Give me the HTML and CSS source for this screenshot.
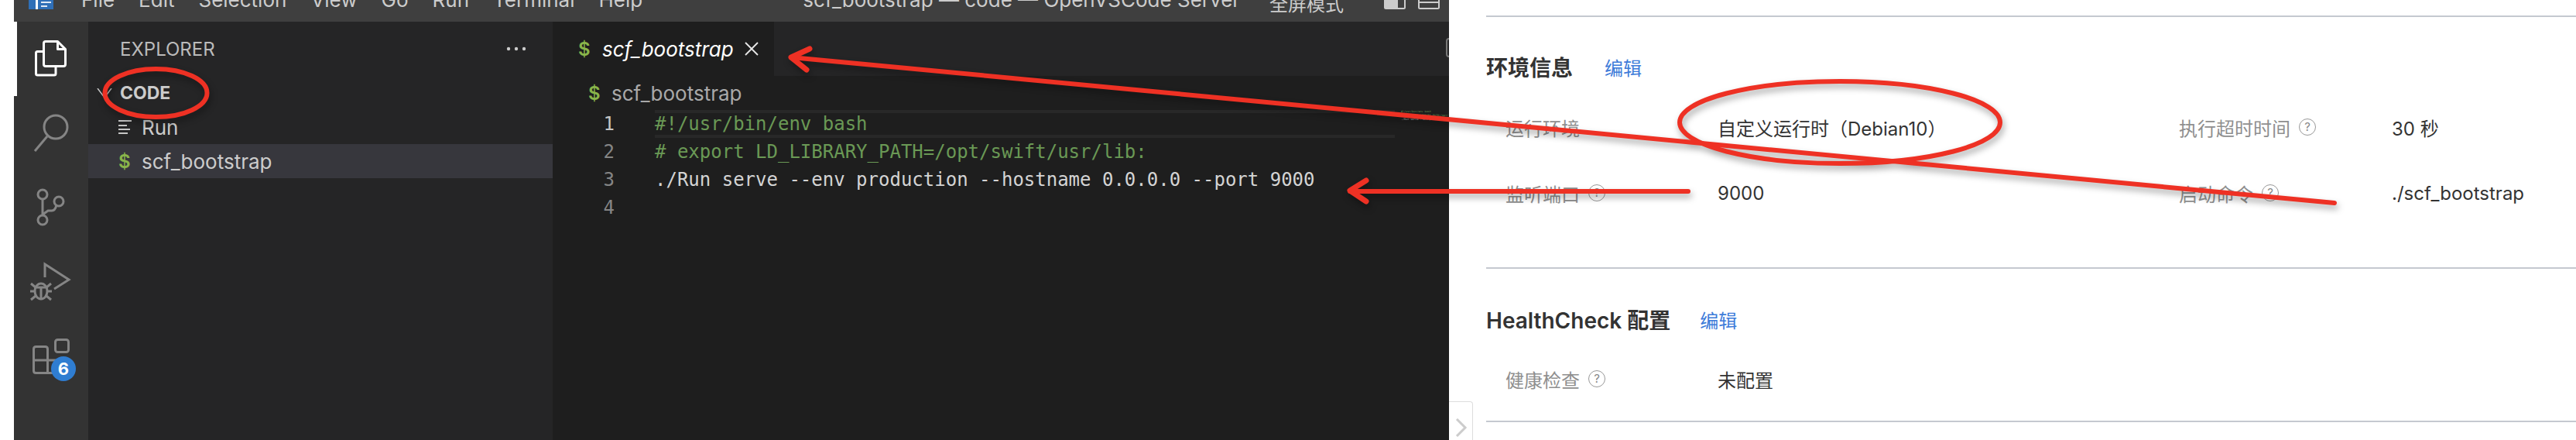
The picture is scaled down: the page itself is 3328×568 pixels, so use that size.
FILE: index.html
```html
<!DOCTYPE html>
<html lang="zh-CN">
<head>
<meta charset="utf-8">
<title>scf_bootstrap — code — OpenVSCode Server</title>
<link rel="stylesheet" href="styles.css">
</head>
<body>
<div class="page">
  <div class="gutter"></div>
  <div class="vscode">
    <header class="titlebar">
      <svg class="logo" viewBox="0 0 32 12"><rect width="32" height="12" fill="#2f6fb7"/><rect x="9" width="3" height="12" fill="#fff"/><rect x="16" y="2" width="13" height="2" fill="#dfe9f5"/><rect x="16" y="7" width="8" height="2" fill="#dfe9f5"/></svg>
      <nav class="menu"><span>File</span><span>Edit</span><span>Selection</span><span>View</span><span>Go</span><span>Run</span><span>Terminal</span><span>Help</span></nav>
      <div class="window-title">scf_bootstrap — code — OpenVSCode Server</div>
      <div class="fullscreen">全屏模式</div>
      <svg class="layout-icon" viewBox="0 0 28 12"><path d="M1 0V9.5Q1 11 2.500 11H25.500Q27 11 27 9.500V0" fill="none" stroke="#ccc" stroke-width="2"/><rect x="1" width="17" height="11" fill="#ccc"/></svg>
      <svg class="layout-icon" viewBox="0 0 28 12"><path d="M1 0V9.5Q1 11 2.500 11H25.500Q27 11 27 9.500V0M1 3H27" fill="none" stroke="#ccc" stroke-width="2"/></svg>
    </header>
    <div class="workbench">
      <aside class="activity">
        <div class="activity-item active">
          <svg class="activity-icon" viewBox="0 0 64 64"><g fill="none" stroke="#fff" stroke-width="3" stroke-linejoin="round"><path d="M25 9.500H40.500L50.500 19.500V39Q50.500 41.500 48 41.500H25Q22.500 41.500 22.500 39V12Q22.500 9.500 25 9.500Z"/><path d="M40.500 9.500V19.500H50.500"/><path d="M22.500 22.500H14.500Q12.500 22.500 12.500 24.500V51Q12.500 53 14.500 53H36Q38 53 38 51V41.500"/></g></svg>
        </div>
        <div class="activity-item">
          <svg class="activity-icon" viewBox="0 0 64 64"><g fill="none" stroke="#858585" stroke-width="3"><circle cx="38" cy="24" r="15"/><path d="M27 36L11 55"/></g></svg>
        </div>
        <div class="activity-item">
          <svg class="activity-icon" viewBox="0 0 64 64"><g fill="none" stroke="#858585" stroke-width="3"><circle cx="21" cy="15" r="6"/><circle cx="42" cy="24" r="6"/><circle cx="21" cy="48" r="6"/><path d="M21 21V42M21 41L28 36H33Q37 36 39 29"/></g></svg>
        </div>
        <div class="activity-item">
          <svg class="activity-icon" viewBox="0 0 64 64"><g fill="none" stroke="#858585" stroke-width="3"><path d="M24 26V9L55 29L36 41"/><ellipse cx="19" cy="44" rx="8" ry="10"/><path d="M12 39H25M19 39V54M6 34L12 39M32 34L26 39M5 44H11M27 44H33M6 55L12 50M32 55L26 50"/></g></svg>
        </div>
        <div class="activity-item">
          <svg class="activity-icon" viewBox="0 0 64 64"><g fill="none" stroke="#858585" stroke-width="3"><rect x="37.500" y="10.500" width="17" height="16" rx="3"/><path d="M27.500 53.500H12.500Q9.500 53.500 9.500 50.500V22.500Q9.500 19.500 12.500 19.500H24.500Q27.500 19.500 27.500 22.500V53.500ZM9.500 37H42M27.500 53.500H42"/></g></svg>
          <span class="badge">6</span>
        </div>
      </aside>
      <aside class="sidebar">
        <div class="sidebar-header"><span>EXPLORER</span><svg class="dots" viewBox="0 0 26 6"><circle cx="3" cy="3" r="2.200" fill="#ccc"/><circle cx="13" cy="3" r="2.200" fill="#ccc"/><circle cx="23" cy="3" r="2.200" fill="#ccc"/></svg></div>
        <div class="tree-root"><svg class="tree-chevron" viewBox="0 0 20 12"><path d="M1 0L10 12L19 0" fill="none" stroke="#c5c5c5" stroke-width="1.500"/></svg><strong>CODE</strong></div>
        <div class="tree-row"><svg class="file-lines" viewBox="0 0 18 18"><path d="M0 1H17M0 7H11M0 12H15M0 17H12" stroke="#c5c5c5" stroke-width="2"/></svg><span>Run</span></div>
        <div class="tree-row selected"><span class="dollar">$</span><span>scf_bootstrap</span></div>
      </aside>
      <main class="editor">
        <div class="tabbar">
          <div class="tab"><span class="dollar">$</span><em>scf_bootstrap</em><svg class="tab-close" viewBox="0 0 18 18"><path d="M1 1L17 17M17 1L1 17" stroke="#e8e8e8" stroke-width="1.800"/></svg></div>
          <div class="tab-action"></div>
        </div>
        <div class="breadcrumb"><span class="dollar">$</span><span>scf_bootstrap</span></div>
        <div class="editor-body">
          <div class="code">
            <div class="code-line current"><span class="line-number">1</span><code class="comment">#!/usr/bin/env bash</code></div>
            <div class="code-line"><span class="line-number">2</span><code class="comment"># export LD_LIBRARY_PATH=/opt/swift/usr/lib:</code></div>
            <div class="code-line"><span class="line-number">3</span><code>./Run serve --env production --hostname 0.0.0.0 --port 9000</code></div>
            <div class="code-line"><span class="line-number">4</span><code></code></div>
          </div>
          <div class="minimap"><div class="mini-comment">#!/usr/bin/env bash</div><div class="mini-comment"># export LD_LIBRARY_PATH=/opt/</div><div>./Run serve --env production</div></div>
        </div>
      </main>
    </div>
  </div>
  <section class="panel">
    <div class="section first">
      <div class="section-title"><h2>环境信息</h2><a>编辑</a></div>
      <div class="info-grid">
        <div class="label">运行环境</div><div class="value">自定义运行时（Debian10）</div>
        <div class="label">执行超时时间<i class="help">?</i></div><div class="value">30 秒</div>
        <div class="label">监听端口<i class="help">?</i></div><div class="value">9000</div>
        <div class="label">启动命令<i class="help">?</i></div><div class="value">./scf_bootstrap</div>
      </div>
    </div>
    <div class="section second">
      <div class="section-title"><h2>HealthCheck 配置</h2><a>编辑</a></div>
      <div class="info-grid">
        <div class="label">健康检查<i class="help">?</i></div><div class="value">未配置</div>
      </div>
    </div>
    <div class="collapse"><svg viewBox="0 0 16 24"><path d="M2 1L13 12L2 23" fill="none" stroke="#ccc" stroke-width="3"/></svg></div>
  </section>
</div>
<svg class="annotations" viewBox="0 0 3328 568">
  <g fill="none" stroke="#ee3124" stroke-width="6" stroke-linecap="round" stroke-linejoin="round">
    <ellipse cx="201.500" cy="120" rx="66" ry="31"/>
    <ellipse cx="2377" cy="158" rx="207" ry="53"/>
    <path d="M1022 74L3016 262" stroke-width="6"/>
    <path d="M1046 63L1022 74L1042 90" stroke-width="7"/>
    <path d="M1744 247H2181" stroke-width="6"/>
    <path d="M1765 233L1744 246L1765 260" stroke-width="7"/>
  </g>
</svg>
</body>
</html>
```

FILE: styles.css
```css
* { box-sizing: border-box; }
html, body { margin: 0; height: 100%; background: #fff; overflow: hidden; }
body { position: relative; font-family: Inter, "Noto Sans CJK SC", sans-serif; }

.page { display: flex; height: 568px; }
.gutter { width: 18px; flex: none; }
.vscode { width: 1854px; flex: none; display: flex; flex-direction: column; overflow: hidden; background: #1e1e1e; }

.titlebar { height: 28px; flex: none; display: flex; align-items: flex-start; padding-left: 19px; background: #3f3f3f; color: #ccc; font-size: 26px; line-height: 30px; overflow: hidden; }
.logo { width: 32px; height: 12px; flex: none; }
.menu { display: flex; gap: 31px; margin: -15px 0 0 36px; }
.window-title { margin: -15px 0 0 207px; white-space: nowrap; }
.fullscreen { margin: -11px 0 0 auto; font-size: 24px; font-family: "Noto Sans CJK SC", sans-serif; }
.layout-icon { width: 28px; height: 12px; flex: none; margin-left: 16px; }
.fullscreen + .layout-icon { margin-left: 52px; }
.layout-icon:last-child { margin-right: 12px; }

.workbench { flex: 1; display: flex; min-height: 0; }
.activity { width: 96px; flex: none; background: #333; }
.activity-item { position: relative; height: 96px; display: flex; align-items: center; justify-content: center; }
.activity-item.active { box-shadow: inset 4px 0 0 #fff; }
.activity-icon { width: 64px; height: 64px; }
.badge { position: absolute; left: 48px; top: 48px; width: 32px; height: 32px; border-radius: 50%; background: #2f7dd1; color: #fff; font-size: 22px; font-weight: 700; line-height: 32px; text-align: center; }

.sidebar { width: 600px; flex: none; background: #252526; color: #ccc; font-size: 26px; }
.sidebar-header { height: 70px; display: flex; align-items: center; justify-content: space-between; padding: 0 34px 0 41px; font-size: 24px; color: #bbb; }
.dots { width: 26px; height: 6px; }
.tree-root { height: 44px; display: flex; align-items: center; padding-left: 11px; font-size: 23px; color: #ccc; }
.tree-root strong { font-weight: 700; }
.tree-chevron { width: 20px; height: 12px; margin-right: 10px; }
.tree-row { height: 44px; display: flex; align-items: center; padding-left: 39px; }
.tree-row.selected { background: #37373d; }
.file-lines { width: 18px; height: 18px; margin-right: 12px; }
.tree-row .dollar { width: 30px; }
.dollar { color: #89b54a; font-weight: 600; font-size: 24px; flex: none; }

.editor { flex: 1; min-width: 0; display: flex; flex-direction: column; background: #1e1e1e; }
.tabbar { height: 70px; flex: none; display: flex; justify-content: space-between; background: #252526; overflow: hidden; }
.tab { width: 286px; display: flex; align-items: center; padding-left: 33px; background: #1e1e1e; color: #fff; font-size: 26px; }
.tab .dollar { width: 31px; }
.tab em { font-style: italic; }
.tab-close { width: 18px; height: 18px; margin-left: 14px; }
.tab-action { width: 26px; height: 25px; margin: 21px -22px 0 0; border: 2px solid #777; border-radius: 4px; }

.breadcrumb { height: 44px; flex: none; display: flex; align-items: center; padding-left: 46px; color: #a9a9a9; font-size: 26px; }
.breadcrumb .dollar { width: 30px; }

.editor-body { flex: 1; display: flex; }
.code { flex: 1; min-width: 0; }
.code-line { height: 36px; display: flex; align-items: center; color: #d4d4d4; font-family: "DejaVu Sans Mono", monospace; font-size: 24px; white-space: pre; }
.line-number { width: 80px; margin-right: 52px; flex: none; text-align: right; color: #858585; }
.code-line code { flex: 1; font: inherit; }
.code-line.current .line-number { color: #c6c6c6; }
.code-line.current code { height: 36px; line-height: 28px; border-top: 4px solid #282828; border-bottom: 4px solid #282828; }
.comment { color: #6a9955; }

.minimap { width: 70px; flex: none; padding: 0 0 0 8px; font-family: "DejaVu Sans Mono", monospace; font-size: 3.400px; line-height: 5px; color: #bbb; white-space: pre; overflow: hidden; }
.mini-comment { color: #6a9955; }

.panel { position: relative; flex: 1; min-width: 0; padding: 20px 0 0 48px; color: #333; font-family: Inter, "Noto Sans CJK SC", sans-serif; font-size: 24px; }
.section { border-top: 2px solid #c5c9d0; }
.section.first { padding: 44px 0 76px; }
.section.second { padding: 45px 0 34px; border-bottom: 2px solid #c5c9d0; }
.section-title { display: flex; align-items: center; height: 40px; }
.section-title h2 { margin: 0; font-size: 28px; font-weight: 600; color: #333; }
.section-title a { margin-left: 41px; color: #3d7bd9; font-size: 24px; font-family: "Noto Sans CJK SC", sans-serif; }
.second .section-title a { margin-left: 38px; }
.info-grid { display: grid; grid-template-columns: 274px 596px 275px 1fr; grid-auto-rows: 40px; row-gap: 45px; align-items: center; margin-top: 38px; padding-left: 25px; }
.second .info-grid { margin-top: 37px; }
.label { display: flex; align-items: center; color: #8f8f8f; }
.value { color: #333; }
.help { width: 22px; height: 22px; margin-left: 11px; flex: none; border: 1.500px solid #999; border-radius: 50%; color: #888; font-size: 15px; font-style: normal; line-height: 19px; text-align: center; }

.collapse { position: absolute; left: 0; top: 518px; width: 31px; height: 50px; border: 1px solid #ddd; border-left: 0; border-bottom: 0; border-radius: 0 4px 0 0; padding: 21px 0 0 8px; }
.collapse svg { display: block; width: 16px; height: 24px; }

.annotations { position: absolute; left: 0; top: 0; width: 3328px; height: 568px; pointer-events: none; filter: drop-shadow(2px 5px 4px rgba(0, 0, 0, .35)); }
```
